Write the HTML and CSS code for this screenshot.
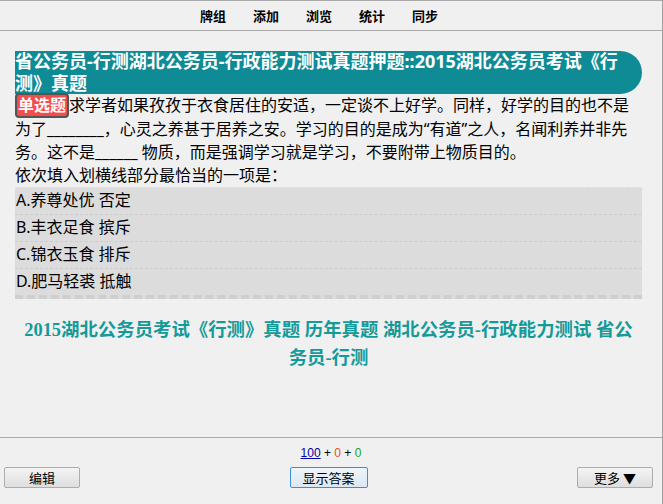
FILE: index.html
```html
<!DOCTYPE html>
<html lang="zh">
<head>
    <meta charset="UTF-8">
    <meta name="viewport" content="width=device-width, initial-scale=1.0">
    <title>浏览</title>
    <link rel="stylesheet" href="styles.css">
</head>
<body>
    <div class="window">
        <div class="topbar">
            <a class="nav-item">牌组</a>
            <a class="nav-item">添加</a>
            <a class="nav-item">浏览</a>
            <a class="nav-item">统计</a>
            <a class="nav-item">同步</a>
        </div>

        <div class="main">
            <div class="card-title">省公务员-行测湖北公务员-行政能力测试真题押题::2015湖北公务员考试《行测》真题</div>
            <div class="question">
                <span class="badge">单选题</span>求学者如果孜孜于衣食居住的安适，一定谈不上好学。同样，好学的目的也不是为了________，心灵之养甚于居养之安。学习的目的是成为“有道”之人，名闻利养并非先务。这不是______ 物质，而是强调学习就是学习，不要附带上物质目的。<br>依次填入划横线部分最恰当的一项是：
            </div>
            <div class="options">
                <div class="option">A.养尊处优 否定</div>
                <div class="option">B.丰衣足食 摈斥</div>
                <div class="option">C.锦衣玉食 排斥</div>
                <div class="option">D.肥马轻裘 抵触</div>
            </div>
            <div class="tags">2015湖北公务员考试《行测》真题 历年真题 湖北公务员-行政能力测试 省公务员-行测</div>
        </div>

        <div class="bottombar">
            <div class="counts">
                <span class="count-new">100</span> + <span class="count-learn">0</span> + <span class="count-review">0</span>
            </div>
            <div class="buttons">
                <button class="btn">编辑</button>
                <button class="btn btn-focus">显示答案</button>
                <button class="btn">更多 ▼</button>
            </div>
        </div>
    </div>
</body>
</html>
```

FILE: styles.css
```css
html, body {
    margin: 0;
    height: 100%;
}
body {
    background-color: #f0f0f0;
    font-family: "Noto Sans", "Noto Sans CJK SC", sans-serif;
    color: #000;
}
.window {
    height: 504px;
    box-sizing: border-box;
    border-right: 1px solid #a0a0a0;
    display: flex;
    flex-direction: column;
}
.topbar {
    height: 29px;
    border-top: 1px solid #a9a9a9;
    border-bottom: 1px solid #a9a9a9;
    display: flex;
    justify-content: center;
    align-items: center;
    gap: 27px;
    padding-right: 24px;
    font-family: "Noto Sans CJK SC", sans-serif;
    font-size: 13px;
}
.nav-item {
    color: #000;
    font-weight: bold;
    cursor: pointer;
}
.main {
    flex: 1;
    padding: 20px 20px 0 15px;
}
.card-title {
    background-color: #0f8b96;
    color: #fff;
    font-weight: bold;
    font-size: 18px;
    line-height: 21.5px;
    border-radius: 0 22px 22px 0;
}
.question {
    font-size: 16px;
    line-height: 23px;
}
.badge {
    display: inline-block;
    vertical-align: top;
    margin-top: -1px;
    height: 21px;
    background-color: #f24c4c;
    color: #fff;
    font-weight: bold;
    border: 2px solid #555;
    border-radius: 4px;
    padding: 0 1px;
    line-height: 21px;
}
.options {
    background-color: #dcdcdc;
    border-top: 1px dashed #e4e4e4;
    border-bottom: 4px dashed #cfcfcf;
    font-size: 16px;
}
.option {
    height: 26px;
    line-height: 24px;
    padding-left: 1px;
    border-bottom: 1px dashed #cccccc;
}
.option:last-child {
    border-bottom: none;
}
.tags {
    margin-top: 17px;
    padding: 0 6px;
    text-align: center;
    font-family: "Liberation Serif", "Noto Sans CJK SC", serif;
    font-weight: bold;
    font-size: 18.4px;
    line-height: 28px;
    color: #159a9a;
}
.bottombar {
    height: 66px;
    border-top: 1px solid #a9a9a9;
}
.counts {
    text-align: center;
    font-family: "Liberation Sans Narrow", "Liberation Sans", sans-serif;
    font-size: 12px;
    margin-top: 8px;
    height: 14px;
    line-height: 14px;
}
.count-new {
    color: #0000aa;
    text-decoration: underline;
}
.count-learn {
    color: #e0501e;
}
.count-review {
    color: #20a020;
}
.buttons {
    display: flex;
    justify-content: space-between;
    padding: 0 9px 0 4px;
    margin-top: 7px;
}
.btn {
    width: 76px;
    height: 21px;
    padding: 0;
    font-family: "Noto Sans CJK SC", sans-serif;
    font-size: 13px;
    color: #000;
    background: linear-gradient(#f4f4f4, #dedede);
    border: 1px solid #acacac;
    border-radius: 2px;
}
.btn-focus {
    width: 78px;
    border-color: #3c8fd6;
    background: linear-gradient(#eef5fb, #dbe7f2);
}
```
